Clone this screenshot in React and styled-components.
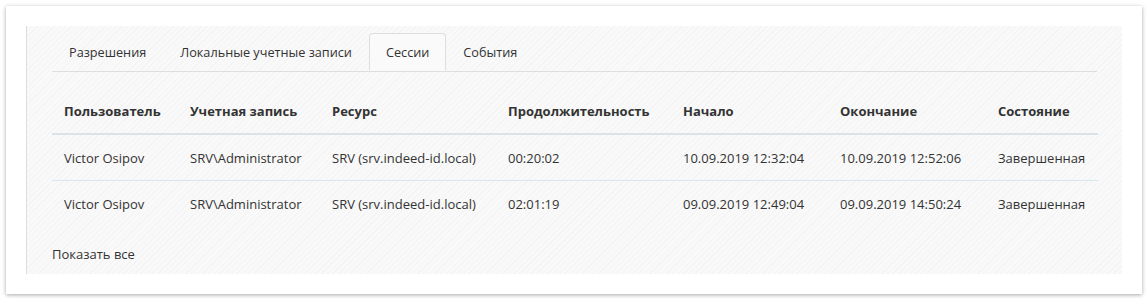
import React from "react";
import styled, { createGlobalStyle } from "styled-components";

const GlobalStyle = createGlobalStyle`
  body {
    margin: 0;
    background: #fff;
    font-family: "Open Sans", "Noto Sans", sans-serif;
    font-size: 13px;
    color: #333;
  }
`;

const Card = styled.div`
  margin: 6px;
  width: 1136px;
  height: 288px;
  box-sizing: border-box;
  padding: 20px;
  background: #fff;
  box-shadow: 0 1px 4px rgba(0, 0, 0, 0.35);
`;

const Panel = styled.div`
  height: 248px;
  width: 1096px;
  box-sizing: border-box;
  padding: 7px 25px 0 25px;
  border-left: 1px solid #d8dee8;
  background: repeating-linear-gradient(
    135deg,
    #f9f9f9 0px,
    #f9f9f9 3px,
    #f4f4f4 3px,
    #f4f4f4 4px
  );
`;

const Tabs = styled.div`
  display: flex;
  border-bottom: 1px solid #dedede;
  height: 38px;
`;

const Tab = styled.div`
  display: flex;
  align-items: center;
  padding: 0 16px;
  height: 38px;
  box-sizing: border-box;
  margin-bottom: -1px;
  font-size: 12.7px;
  border: 1px solid ${(p) => (p.$active ? "#dedede" : "transparent")};
  border-bottom-color: ${(p) => (p.$active ? "#fafafa" : "transparent")};
  border-radius: 4px 4px 0 0;
  background: ${(p) => (p.$active ? "#fafafa" : "transparent")};
  color: #333;
  white-space: nowrap;
`;

const Table = styled.table`
  margin-top: 16px;
  width: 1046px;
  border-collapse: collapse;
  table-layout: fixed;

  th,
  td {
    text-align: left;
    padding: 0 12px;
    height: 45px;
    white-space: nowrap;
  }
  th {
    font-weight: 700;
    border-bottom: 2px solid #dde2e8;
  }
  tbody tr + tr td {
    border-top: 1px solid #d6e8ee;
  }
`;

const ShowAll = styled.div`
  margin-top: 19px;
  color: #333;
`;

const columns = [
  ["Пользователь", 126],
  ["Учетная запись", 142],
  ["Ресурс", 176],
  ["Продолжительность", 175],
  ["Начало", 157],
  ["Окончание", 158],
  ["Состояние", 112],
];

const rows = [
  [
    "Victor Osipov",
    "SRV\\Administrator",
    "SRV (srv.indeed-id.local)",
    "00:20:02",
    "10.09.2019 12:32:04",
    "10.09.2019 12:52:06",
    "Завершенная",
  ],
  [
    "Victor Osipov",
    "SRV\\Administrator",
    "SRV (srv.indeed-id.local)",
    "02:01:19",
    "09.09.2019 12:49:04",
    "09.09.2019 14:50:24",
    "Завершенная",
  ],
];

const tabs = ["Разрешения", "Локальные учетные записи", "Сессии", "События"];

export default () => (
  <>
    <GlobalStyle />
    <Card>
      <Panel>
        <Tabs>
          {tabs.map((t) => (
            <Tab key={t} $active={t === "Сессии"}>
              {t}
            </Tab>
          ))}
        </Tabs>
        <Table>
          <colgroup>
            {columns.map(([name, w]) => (
              <col key={name} style={{ width: w }} />
            ))}
          </colgroup>
          <thead>
            <tr>
              {columns.map(([name]) => (
                <th key={name}>{name}</th>
              ))}
            </tr>
          </thead>
          <tbody>
            {rows.map((r, i) => (
              <tr key={i}>
                {r.map((c, j) => (
                  <td key={j}>{c}</td>
                ))}
              </tr>
            ))}
          </tbody>
        </Table>
        <ShowAll>Показать все</ShowAll>
      </Panel>
    </Card>
  </>
);
